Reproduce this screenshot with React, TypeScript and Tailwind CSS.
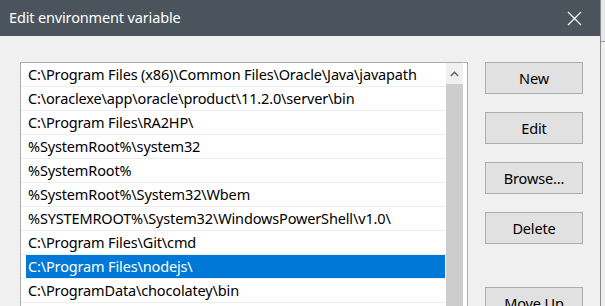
import React from 'react';

const paths = [
  'C:\\Program Files (x86)\\Common Files\\Oracle\\Java\\javapath',
  'C:\\oraclexe\\app\\oracle\\product\\11.2.0\\server\\bin',
  'C:\\Program Files\\RA2HP\\',
  '%SystemRoot%\\system32',
  '%SystemRoot%',
  '%SystemRoot%\\System32\\Wbem',
  '%SYSTEMROOT%\\System32\\WindowsPowerShell\\v1.0\\',
  'C:\\Program Files\\Git\\cmd',
  'C:\\Program Files\\nodejs\\',
  'C:\\ProgramData\\chocolatey\\bin',
  '',
];

const selected = 8;

function DialogButton({ label, className = '' }: { label: string; className?: string }) {
  return (
    <button
      className={`w-[98px] h-8 shrink-0 bg-[#e1e1e1] border border-[#adadad] text-[14.5px] tracking-[-0.15px] text-black leading-none ${className}`}
    >
      {label}
    </button>
  );
}

export default function App() {
  return (
    <div
      className="w-[605px] h-[306px] overflow-hidden flex bg-[#f0f0f0]"
      style={{ fontFamily: '"Noto Sans", "Open Sans", sans-serif' }}
    >
      <div className="w-[600px] shrink-0 flex flex-col">
        {/* title bar */}
        <div className="h-9 shrink-0 bg-[#4b545c] flex items-center justify-between pl-[9px] pr-[18px]">
          <span className="text-white text-[14.5px] tracking-[-0.15px]">Edit environment variable</span>
          <svg width="15" height="15" viewBox="0 0 15 15" className="text-white">
            <path d="M1 1 L14 14 M14 1 L1 14" stroke="currentColor" strokeWidth="1.2" />
          </svg>
        </div>

        {/* body */}
        <div className="flex-1 flex pl-5 pt-[26px] gap-[17px] overflow-hidden">
          <div className="w-[448px] h-[300px] shrink-0 bg-white border border-[#acacac] flex">
            <div className="w-[424px] flex flex-col">
              {paths.map((p, i) => (
                <div key={i} className="h-6 shrink-0 border-b border-[#ececec] flex">
                  <div
                    className={`ml-[5px] flex-1 pl-[2px] flex items-center text-[14.5px] tracking-[-0.15px] whitespace-nowrap ${
                      i === selected ? 'bg-[#0078d7] text-white' : 'text-black'
                    }`}
                  >
                    {p}
                  </div>
                </div>
              ))}
            </div>
            <div className="ml-px w-[17px] flex flex-col">
              <div className="h-[21px] flex items-center justify-center bg-[#f0f0f0]">
                <svg width="9" height="6" viewBox="0 0 9 6">
                  <path d="M0.8 5 L4.5 1.2 L8.2 5" fill="none" stroke="#606060" strokeWidth="1.4" />
                </svg>
              </div>
              <div className="flex-1 bg-[#cdcdcd]" />
            </div>
          </div>

          <div className="flex flex-col gap-[18px]">
            <DialogButton label="New" />
            <DialogButton label="Edit" />
            <DialogButton label="Browse..." />
            <DialogButton label="Delete" />
            <DialogButton label="Move Up" className="mt-[25px]" />
          </div>
        </div>
      </div>

      {/* background window edge */}
      <div className="flex-1 border-l border-[#8a8a8a] bg-[#e8e8e8] flex flex-col">
        <div className="h-[42px] border-b border-[#9a9a9a]" />
        <div className="flex-1 bg-[#f0f0f0]" />
      </div>
    </div>
  );
}
